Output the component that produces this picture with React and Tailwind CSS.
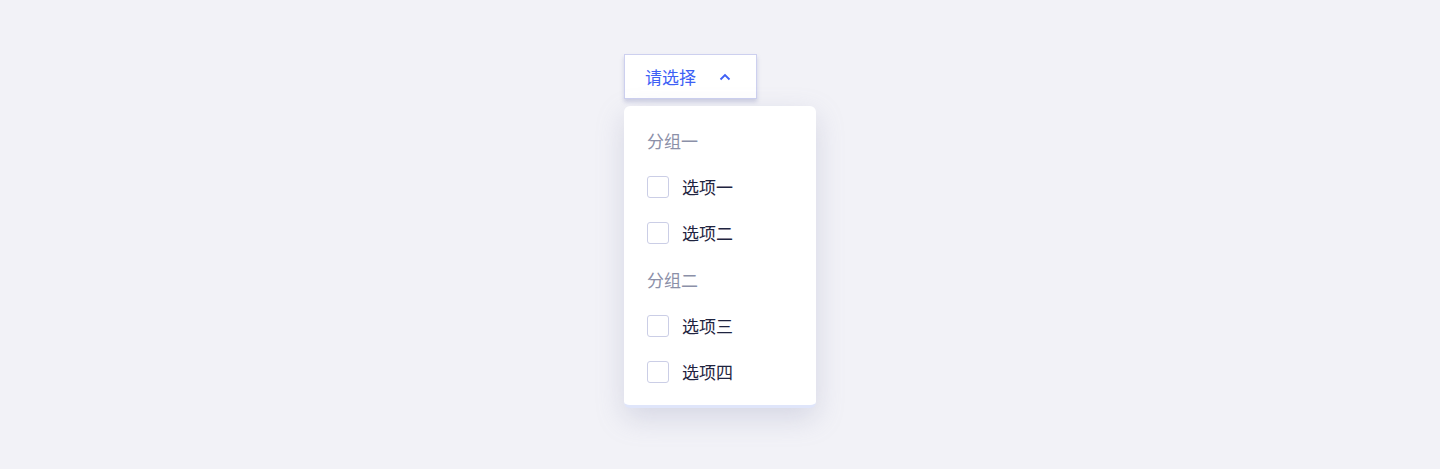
import React from "react";

const font = { fontFamily: '"Noto Sans CJK SC", "Noto Sans", sans-serif' };

function Checkbox() {
  return <span className="box-border block w-[22px] h-[22px] rounded-[3px] border border-[#cbcee6] bg-white" />;
}

function Option({ label }) {
  return (
    <div className="flex items-center h-[46px] gap-[13px]">
      <Checkbox />
      <span className="text-[17px] leading-[22px] text-[#1f2440]">{label}</span>
    </div>
  );
}

function Group({ title, first }) {
  return (
    <div className={first ? "pb-[12px]" : "pt-[13px] pb-[12px]"}>
      <div className="text-[17px] leading-[22px] text-[#8b90a8]">{title}</div>
    </div>
  );
}

export default function App() {
  return (
    <div className="min-h-[469px] w-full bg-[#f2f2f7] flex justify-center" style={font}>
      <div className="w-[192px] pt-[54px] flex flex-col items-start">
        <button className="box-border w-[133px] h-[45px] bg-white border border-[#cdd0ef] shadow-[0_3px_4px_rgba(120,125,180,0.3)] flex items-center pl-[20px] pr-[25px] justify-between">
          <span className="text-[17px] leading-[22px] text-[#3e5ff5]">请选择</span>
          <svg width="12" height="8" viewBox="0 0 12 8" fill="none">
            <path d="M1.5 6.5 L6 2 L10.5 6.5" stroke="#3e5ff5" strokeWidth="1.8" />
          </svg>
        </button>
        <div className="box-border mt-[7px] w-[192px] bg-white rounded-[6px] border-b-[3px] border-[#dfe5fa] shadow-[0_10px_28px_rgba(140,145,180,0.28)] pl-[23px] pt-[24px] pb-[10px]">
          <Group title="分组一" first />
          <Option label="选项一" />
          <Option label="选项二" />
          <Group title="分组二" />
          <Option label="选项三" />
          <Option label="选项四" />
        </div>
      </div>
    </div>
  );
}
